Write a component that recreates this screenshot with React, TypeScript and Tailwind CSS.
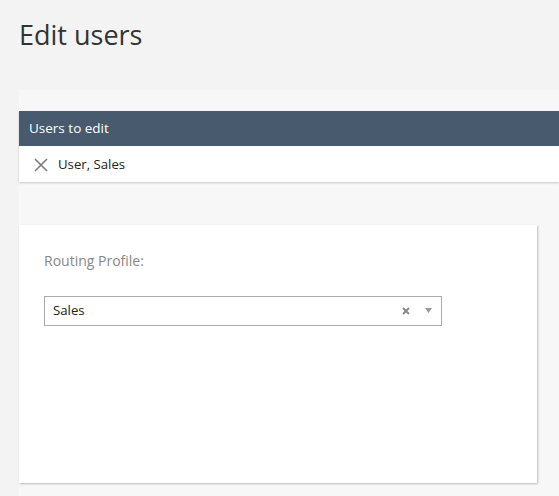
const font = { fontFamily: '"Open Sans", "Noto Sans", Arial, sans-serif' };

const App = () => {
  return (
    <div className="min-h-[496px] bg-[#f3f3f3] text-[#333]" style={font}>
      <h1 className="pl-[19px] pt-[17px] h-[90px] text-[27px] leading-[36px] text-[#333]">Edit users</h1>
      <div className="ml-[19px] bg-[#f7f7f7] pt-[21px] pb-[13px]">
        {/* users to edit */}
        <div className="shadow-[0_1px_2px_rgba(0,0,0,0.2)]">
          <div className="h-[35px] bg-[#475a6e] flex items-center px-[10px] text-white text-[13.5px] font-medium">Users to edit</div>
          <div className="h-[36px] bg-white flex items-center px-[15px] pt-[2px] text-[13.2px] text-[#222] font-medium">
            <svg width="14" height="14" viewBox="0 0 14 14" className="mr-[10px]">
              <path d="M1 1 L13 13 M13 1 L1 13" stroke="#777" strokeWidth="1.5" fill="none" />
            </svg>
            <span>User, Sales</span>
          </div>
        </div>
        {/* routing profile card */}
        <div className="mt-[43px] mr-[22px] h-[258px] bg-white shadow-[1px_1px_2px_rgba(0,0,0,0.25)] px-[25px] pt-[25px]">
          <div className="text-[14px] text-[#888]">Routing Profile:</div>
          <div className="mt-[25px] w-[398px] h-[30px] border border-[#aaa] flex items-center pl-[8px] pr-[9px] text-[13.2px] text-[#222] font-medium">
            <span className="flex-1">Sales</span>
            <svg width="8" height="8" viewBox="0 0 8 8" className="mr-[15px]">
              <path d="M1 1 L7 7 M7 1 L1 7" stroke="#888" strokeWidth="2" fill="none" />
            </svg>
            <svg width="7" height="6" viewBox="0 0 7 6">
              <path d="M0 0 L7 0 L3.5 5 Z" fill="#999" />
            </svg>
          </div>
        </div>
      </div>
    </div>
  );
};

export default App;
